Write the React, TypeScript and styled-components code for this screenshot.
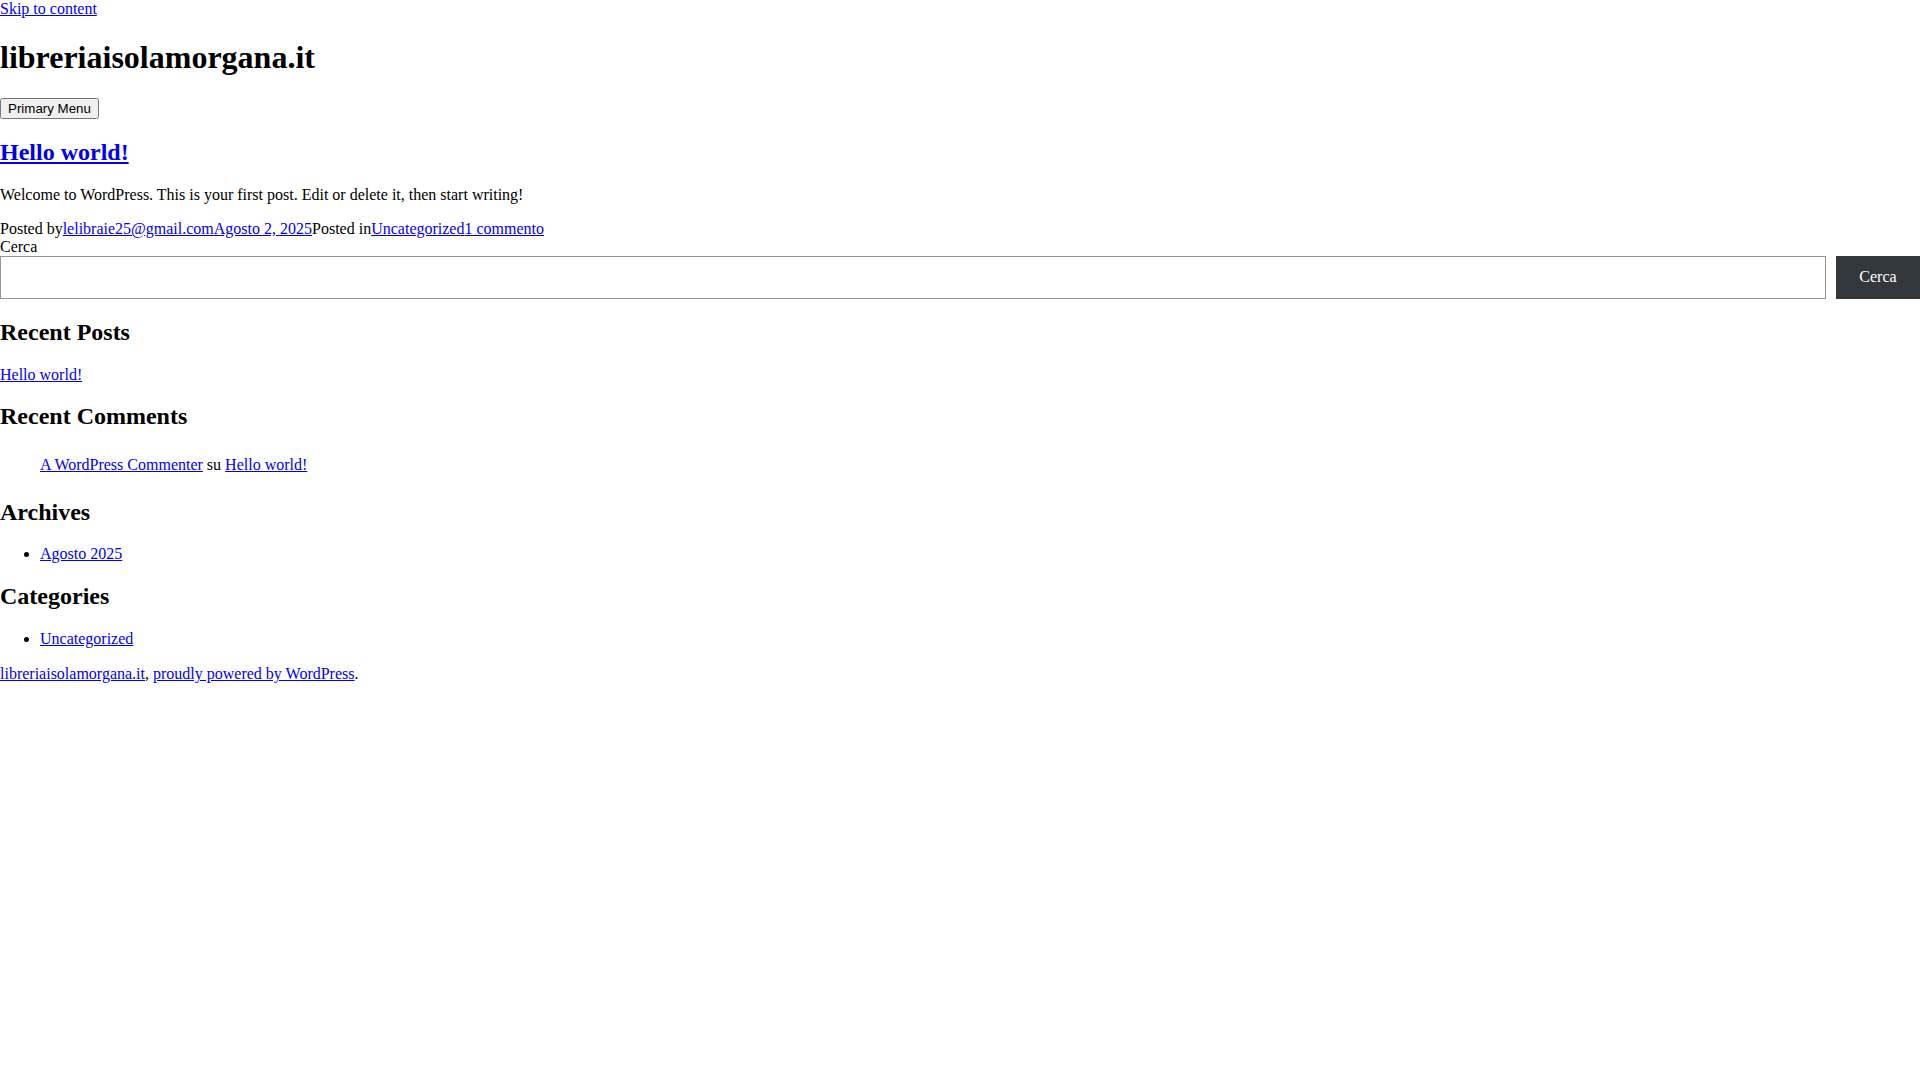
import React from 'react';
import styled, { createGlobalStyle } from 'styled-components';

const GlobalStyle = createGlobalStyle`
  html, body {
    margin: 0;
    padding: 0;
    background: #fff;
  }
  body {
    font-family: "Liberation Serif", "Times New Roman", serif;
    font-size: 16px;
    color: #000;
  }
  a {
    color: #0000ee;
  }
`;

const Page = styled.div`
  display: block;
`;

const SkipLink = styled.a`
  display: inline;
`;

const SiteHeader = styled.header`
  display: block;
`;

const SiteTitle = styled.h1`
  font-size: 32px;
  font-weight: bold;
  margin: 21.44px 0;
`;

const MenuToggle = styled.button`
  font-family: "Liberation Sans", Arial, sans-serif;
  font-size: 13.333px;
  margin: 0;
`;

const PostTitle = styled.h2`
  font-size: 24px;
  margin: 19.92px 0;
`;

const PostText = styled.p`
  margin: 16px 0;
`;

const PostMeta = styled.div`
  display: block;
`;

const SearchLabel = styled.label`
  display: block;
`;

const SearchRow = styled.div`
  display: flex;
  align-items: stretch;
  gap: 10px;
`;

const SearchInput = styled.input`
  flex: 1;
  min-width: 0;
  margin: 0;
  padding: 8px;
  border: 1px solid #949494;
  border-radius: 0;
  font-family: "Liberation Serif", serif;
  font-size: 16px;
  background: #fff;
  outline: none;
`;

const SearchButton = styled.button`
  height: 43px;
  padding: 0 23.4px;
  margin: 0;
  border: none;
  border-radius: 0;
  background: #32373c;
  color: #fff;
  font-family: "Liberation Serif", serif;
  font-size: 16px;
  cursor: pointer;
`;

const WidgetTitle = styled.h2`
  font-size: 24px;
  margin: 19.92px 0;
`;

const PlainList = styled.ul`
  list-style: none;
  padding: 0;
  margin: 16px 0;
`;

const CommentList = styled.ol`
  list-style: none;
  padding-left: 40px;
  margin: 16px 0;
`;

const CommentItem = styled.li`
  padding: 5.5px 0 4.8px;
`;

const BulletList = styled.ul`
  list-style: disc;
  padding-left: 40px;
  margin: 16px 0;
`;

const SiteFooter = styled.footer`
  padding-top: 1px;
`;

export default function App() {
  return (
    <Page>
      <GlobalStyle />
      <SkipLink href="#content">Skip to content</SkipLink>
      <SiteHeader>
        <SiteTitle>libreriaisolamorgana.it</SiteTitle>
        <MenuToggle>Primary Menu</MenuToggle>
      </SiteHeader>

      <main id="content">
        <article>
          <PostTitle>
            <a href="#">Hello world!</a>
          </PostTitle>
          <PostText>
            Welcome to WordPress. This is your first post. Edit or delete it, then start writing!
          </PostText>
          <PostMeta>
            <span>Posted by</span>
            <a href="#">lelibraie25@gmail.com</a>
            <a href="#">Agosto 2, 2025</a>
            <span>Posted in</span>
            <a href="#">Uncategorized</a>
            <a href="#">1 commento</a>
          </PostMeta>
        </article>
      </main>

      <aside>
        <form onSubmit={(e) => e.preventDefault()}>
          <SearchLabel htmlFor="search">Cerca</SearchLabel>
          <SearchRow>
            <SearchInput id="search" type="search" />
            <SearchButton type="submit">Cerca</SearchButton>
          </SearchRow>
        </form>

        <WidgetTitle>Recent Posts</WidgetTitle>
        <PlainList>
          <li>
            <a href="#">Hello world!</a>
          </li>
        </PlainList>

        <WidgetTitle>Recent Comments</WidgetTitle>
        <CommentList>
          <CommentItem>
            <a href="#">A WordPress Commenter</a> su <a href="#">Hello world!</a>
          </CommentItem>
        </CommentList>

        <WidgetTitle>Archives</WidgetTitle>
        <BulletList>
          <li>
            <a href="#">Agosto 2025</a>
          </li>
        </BulletList>

        <WidgetTitle>Categories</WidgetTitle>
        <BulletList>
          <li>
            <a href="#">Uncategorized</a>
          </li>
        </BulletList>
      </aside>

      <SiteFooter>
        <a href="#">libreriaisolamorgana.it</a>, <a href="#">proudly powered by WordPress</a>.
      </SiteFooter>
    </Page>
  );
}
